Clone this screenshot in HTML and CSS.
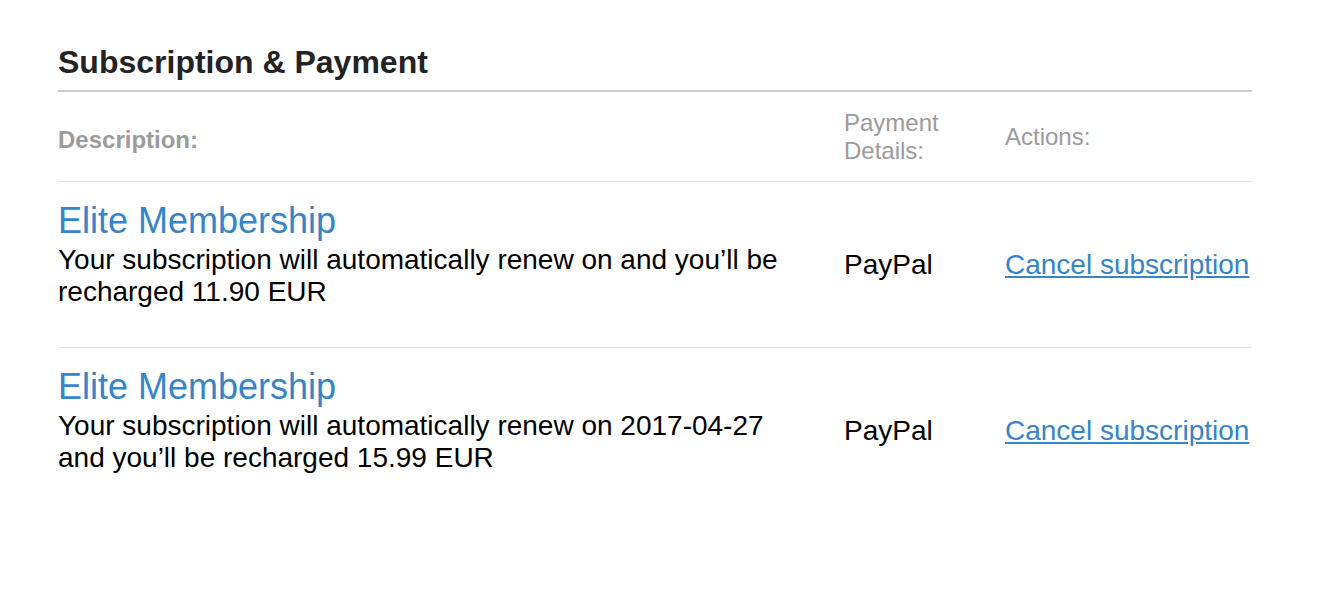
FILE: index.html
```html
<!DOCTYPE html>
<html>
<head>
<meta charset="utf-8">
<title>Subscription &amp; Payment</title>
<link rel="stylesheet" href="styles.css">
</head>
<body>
<div class="PAGE">
  <h2 class="SECTION">Subscription &amp; Payment</h2>
  <table class="SUBS">
    <colgroup>
      <col class="COL-DESC">
      <col class="COL-PAY">
      <col class="COL-ACT">
    </colgroup>
    <thead>
      <tr>
        <th class="DESC">Description:</th>
        <th>Payment Details:</th>
        <th>Actions:</th>
      </tr>
    </thead>
    <tbody>
      <tr>
        <td class="DESC">
          <h3 class="PLAN">Elite Membership</h3>
          <p>Your subscription will automatically renew on and you’ll be recharged 11.90 EUR</p>
        </td>
        <td>PayPal</td>
        <td><a href="#">Cancel subscription</a></td>
      </tr>
      <tr>
        <td class="DESC">
          <h3 class="PLAN">Elite Membership</h3>
          <p>Your subscription will automatically renew on 2017-04-27 and you’ll be recharged 15.99 EUR</p>
        </td>
        <td>PayPal</td>
        <td><a href="#">Cancel subscription</a></td>
      </tr>
    </tbody>
  </table>
</div>
</body>
</html>
```

FILE: styles.css
```css
BODY {
	background-color: white;
	margin		: 0;
	font-family	: "Liberation Sans", arial, helvetica, sans-serif;
	color		: #000;
}
.PAGE {
	width		: 1194px;
	margin-left	: 58px;
	padding-top	: 42px;
}
H2.SECTION {
	margin		: 0;
	font-size	: 32px;
	line-height	: 40px;
	font-weight	: bold;
	color		: #232323;
	padding-bottom	: 8px;
	border-bottom	: 2px solid #cbcbcb;
}
TABLE.SUBS {
	width		: 100%;
	table-layout	: fixed;
	border-collapse	: collapse;
}
COL.COL-DESC { width: 786px; }
COL.COL-PAY  { width: 161px; }
TH {
	text-align	: left;
	vertical-align	: middle;
	font-size	: 24px;
	line-height	: 28px;
	font-weight	: normal;
	color		: #9b9b9b;
	padding		: 17px 30px 16px 0;
	border-bottom	: 1px solid #e6e6e6;
}
TH.DESC {
	font-weight	: bold;
	padding-top	: 20px;
	padding-bottom	: 13px;
}
TD {
	vertical-align	: middle;
	font-size	: 28px;
	line-height	: 32px;
	padding		: 18px 0;
}
TD.DESC { padding-right: 40px; }
TBODY TR + TR { border-top: 1px solid #e6e6e6; }
H3.PLAN {
	margin		: 0 0 2px 0;
	font-size	: 36px;
	line-height	: 42px;
	font-weight	: normal;
	color		: #3585c8;
}
TD P {
	margin		: 0 0 21px 0;
}
A {	color		: #3585c8; }
```
